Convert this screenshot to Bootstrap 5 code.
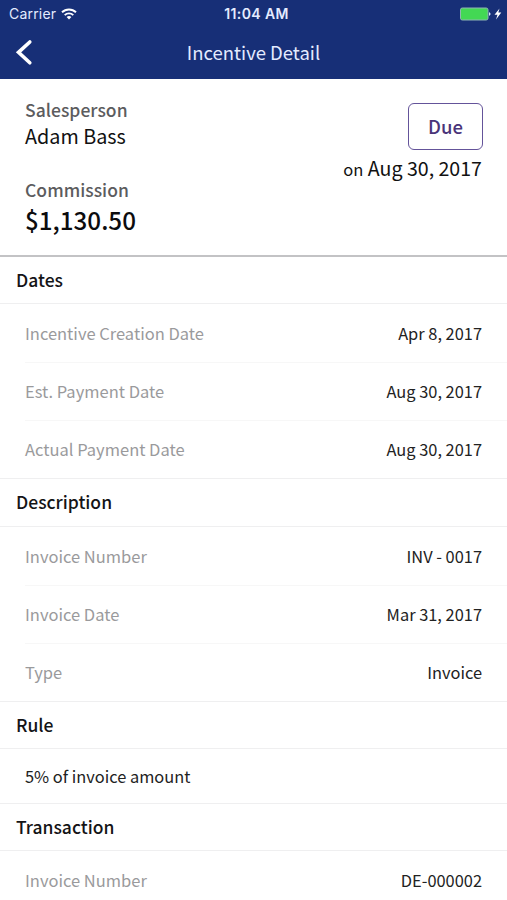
<!DOCTYPE html>
<html lang="en">
<head>
<meta charset="utf-8">
<meta name="viewport" content="width=device-width, initial-scale=1">
<title>Incentive Detail</title>
<link href="https://cdn.jsdelivr.net/npm/bootstrap@5.3.0/dist/css/bootstrap.min.css" rel="stylesheet">
<style>
  body { font-family: "Noto Sans CJK SC", "Noto Sans", sans-serif; font-size: 17px; line-height: 24px; color: #222; background: #fff; height: 900px; overflow: hidden; }
  .app-top { background: #172f77; height: 79px; color: #e4ebff; }
  .status { font-family: Inter, sans-serif; font-size: 14px; line-height: 27px; height: 27px; }
  .status .carrier { letter-spacing: .2px; padding-left: 9px; }
  .status .clock { font-weight: 600; font-size: 14px; letter-spacing: .4px; padding-left: 6px; white-space: nowrap; }
  .wifi { margin-left: 5px; }
  .app-title { height: 52px; }
  .app-title h1 { font-size: 18.5px; line-height: 50px; font-weight: 400; }
  .summary { height: 178px; border-bottom: 2px solid #c3c3c5; padding: 19px 25px 0; }
  .caption { font-size: 17.5px; font-weight: 500; color: #5c5c5e; letter-spacing: .03px; }
  .person { font-size: 19.8px; line-height: 28px; color: #111; }
  .amount { font-size: 24.2px; font-weight: 500; line-height: 35px; color: #0c0c0e; }
  .due { width: 75px; height: 47px; border: 1px solid #64539a; border-radius: 6px; color: #4a3479; font-weight: 500; font-size: 18.5px; line-height: 24px; margin-top: 5px; padding-bottom: 1px; margin-right: -1px; }
  .due-date { font-size: 19.6px; line-height: 28px; color: #111; margin-top: 4px; }
  .due-date small { font-size: 16.5px; }
  .group-title { height: 47.5px; padding-left: 16px; font-size: 17.5px; line-height: 24px; font-weight: 500; color: #141416; border-bottom: 1px solid #efeff0; margin: 0; }
  .group-title.first-title { height: 47px; }
  .group-rows { border-bottom: 1px solid #efeff0; }
  .entry { height: 58px; margin-left: 25px; padding-right: 25px; font-size: 16.5px; }
  .entry + .entry { border-top: 1px solid #f7f7f7; padding-bottom: 1px; }
  .entry dt { font-weight: 400; color: #9a9a9c; }
  .entry dd { font-size: 16.4px; }
  .entry.rule-entry { height: 53.5px; font-size: 16.4px; }
</style>
</head>
<body>
<header class="app-top">
  <div class="status position-relative d-flex justify-content-between align-items-center">
    <div class="d-flex align-items-center">
      <span class="carrier">Carrier</span>
      <svg class="wifi" width="16" height="12" viewBox="0 0 16 12" fill="none" stroke="#fff" stroke-width="1.9"><path d="M1 4.3a10 10 0 0 1 14 0M3.700 7.100a6.200 6.200 0 0 1 8.600 0"/><path d="M8 11.500 5.600 9.100a3.400 3.400 0 0 1 4.800 0Z" fill="#fff" stroke="none"/></svg>
    </div>
    <span class="clock position-absolute start-50 translate-middle-x">11:04 AM</span>
    <svg class="me-1" width="43" height="14" viewBox="0 0 43 14"><rect x=".5" y="1" width="27.500" height="12" rx="1.800" fill="#43d854" stroke="#90b5b5"/><path d="M29 5.300c2 .3 2 3.200 0 3.500Z" fill="#dce8ff"/><path d="M39.500 1.500 34.500 7.800h3L36 12.500l5.300-7h-3Z" fill="#fff"/></svg>
  </div>
  <div class="app-title position-relative d-flex justify-content-center">
    <svg class="position-absolute start-0 top-0" width="40" height="52" viewBox="0 0 40 52" fill="none" stroke="#fff" stroke-width="3.600" stroke-linecap="round"><path d="M29.800 15 18.500 25.300 29.800 35.800"/></svg>
    <h1 class="m-0">Incentive Detail</h1>
  </div>
</header>
<main>
  <section class="summary d-flex justify-content-between">
    <div>
      <div class="caption">Salesperson</div>
      <div class="person">Adam Bass</div>
      <div class="caption mt-4 pt-1">Commission</div>
      <div class="amount">$1,130.50</div>
    </div>
    <div class="d-flex flex-column align-items-end">
      <div class="due d-flex align-items-center justify-content-center">Due</div>
      <div class="due-date"><small>on</small> Aug 30, 2017</div>
    </div>
  </section>
  <section>
    <h2 class="group-title first-title d-flex align-items-center">Dates</h2>
    <dl class="group-rows m-0">
      <div class="entry d-flex align-items-center justify-content-between"><dt>Incentive Creation Date</dt><dd class="m-0">Apr 8, 2017</dd></div>
      <div class="entry d-flex align-items-center justify-content-between"><dt>Est. Payment Date</dt><dd class="m-0">Aug 30, 2017</dd></div>
      <div class="entry d-flex align-items-center justify-content-between"><dt>Actual Payment Date</dt><dd class="m-0">Aug 30, 2017</dd></div>
    </dl>
  </section>
  <section>
    <h2 class="group-title d-flex align-items-center">Description</h2>
    <dl class="group-rows m-0">
      <div class="entry d-flex align-items-center justify-content-between"><dt>Invoice Number</dt><dd class="m-0">INV - 0017</dd></div>
      <div class="entry d-flex align-items-center justify-content-between"><dt>Invoice Date</dt><dd class="m-0">Mar 31, 2017</dd></div>
      <div class="entry d-flex align-items-center justify-content-between"><dt>Type</dt><dd class="m-0">Invoice</dd></div>
    </dl>
  </section>
  <section>
    <h2 class="group-title d-flex align-items-center">Rule</h2>
    <div class="group-rows"><div class="entry rule-entry d-flex align-items-center">5% of invoice amount</div></div>
  </section>
  <section>
    <h2 class="group-title d-flex align-items-center">Transaction</h2>
    <dl class="group-rows m-0">
      <div class="entry d-flex align-items-center justify-content-between"><dt>Invoice Number</dt><dd class="m-0">DE-000002</dd></div>
    </dl>
  </section>
</main>
<script src="https://cdn.jsdelivr.net/npm/bootstrap@5.3.0/dist/js/bootstrap.bundle.min.js"></script>
</body>
</html>
